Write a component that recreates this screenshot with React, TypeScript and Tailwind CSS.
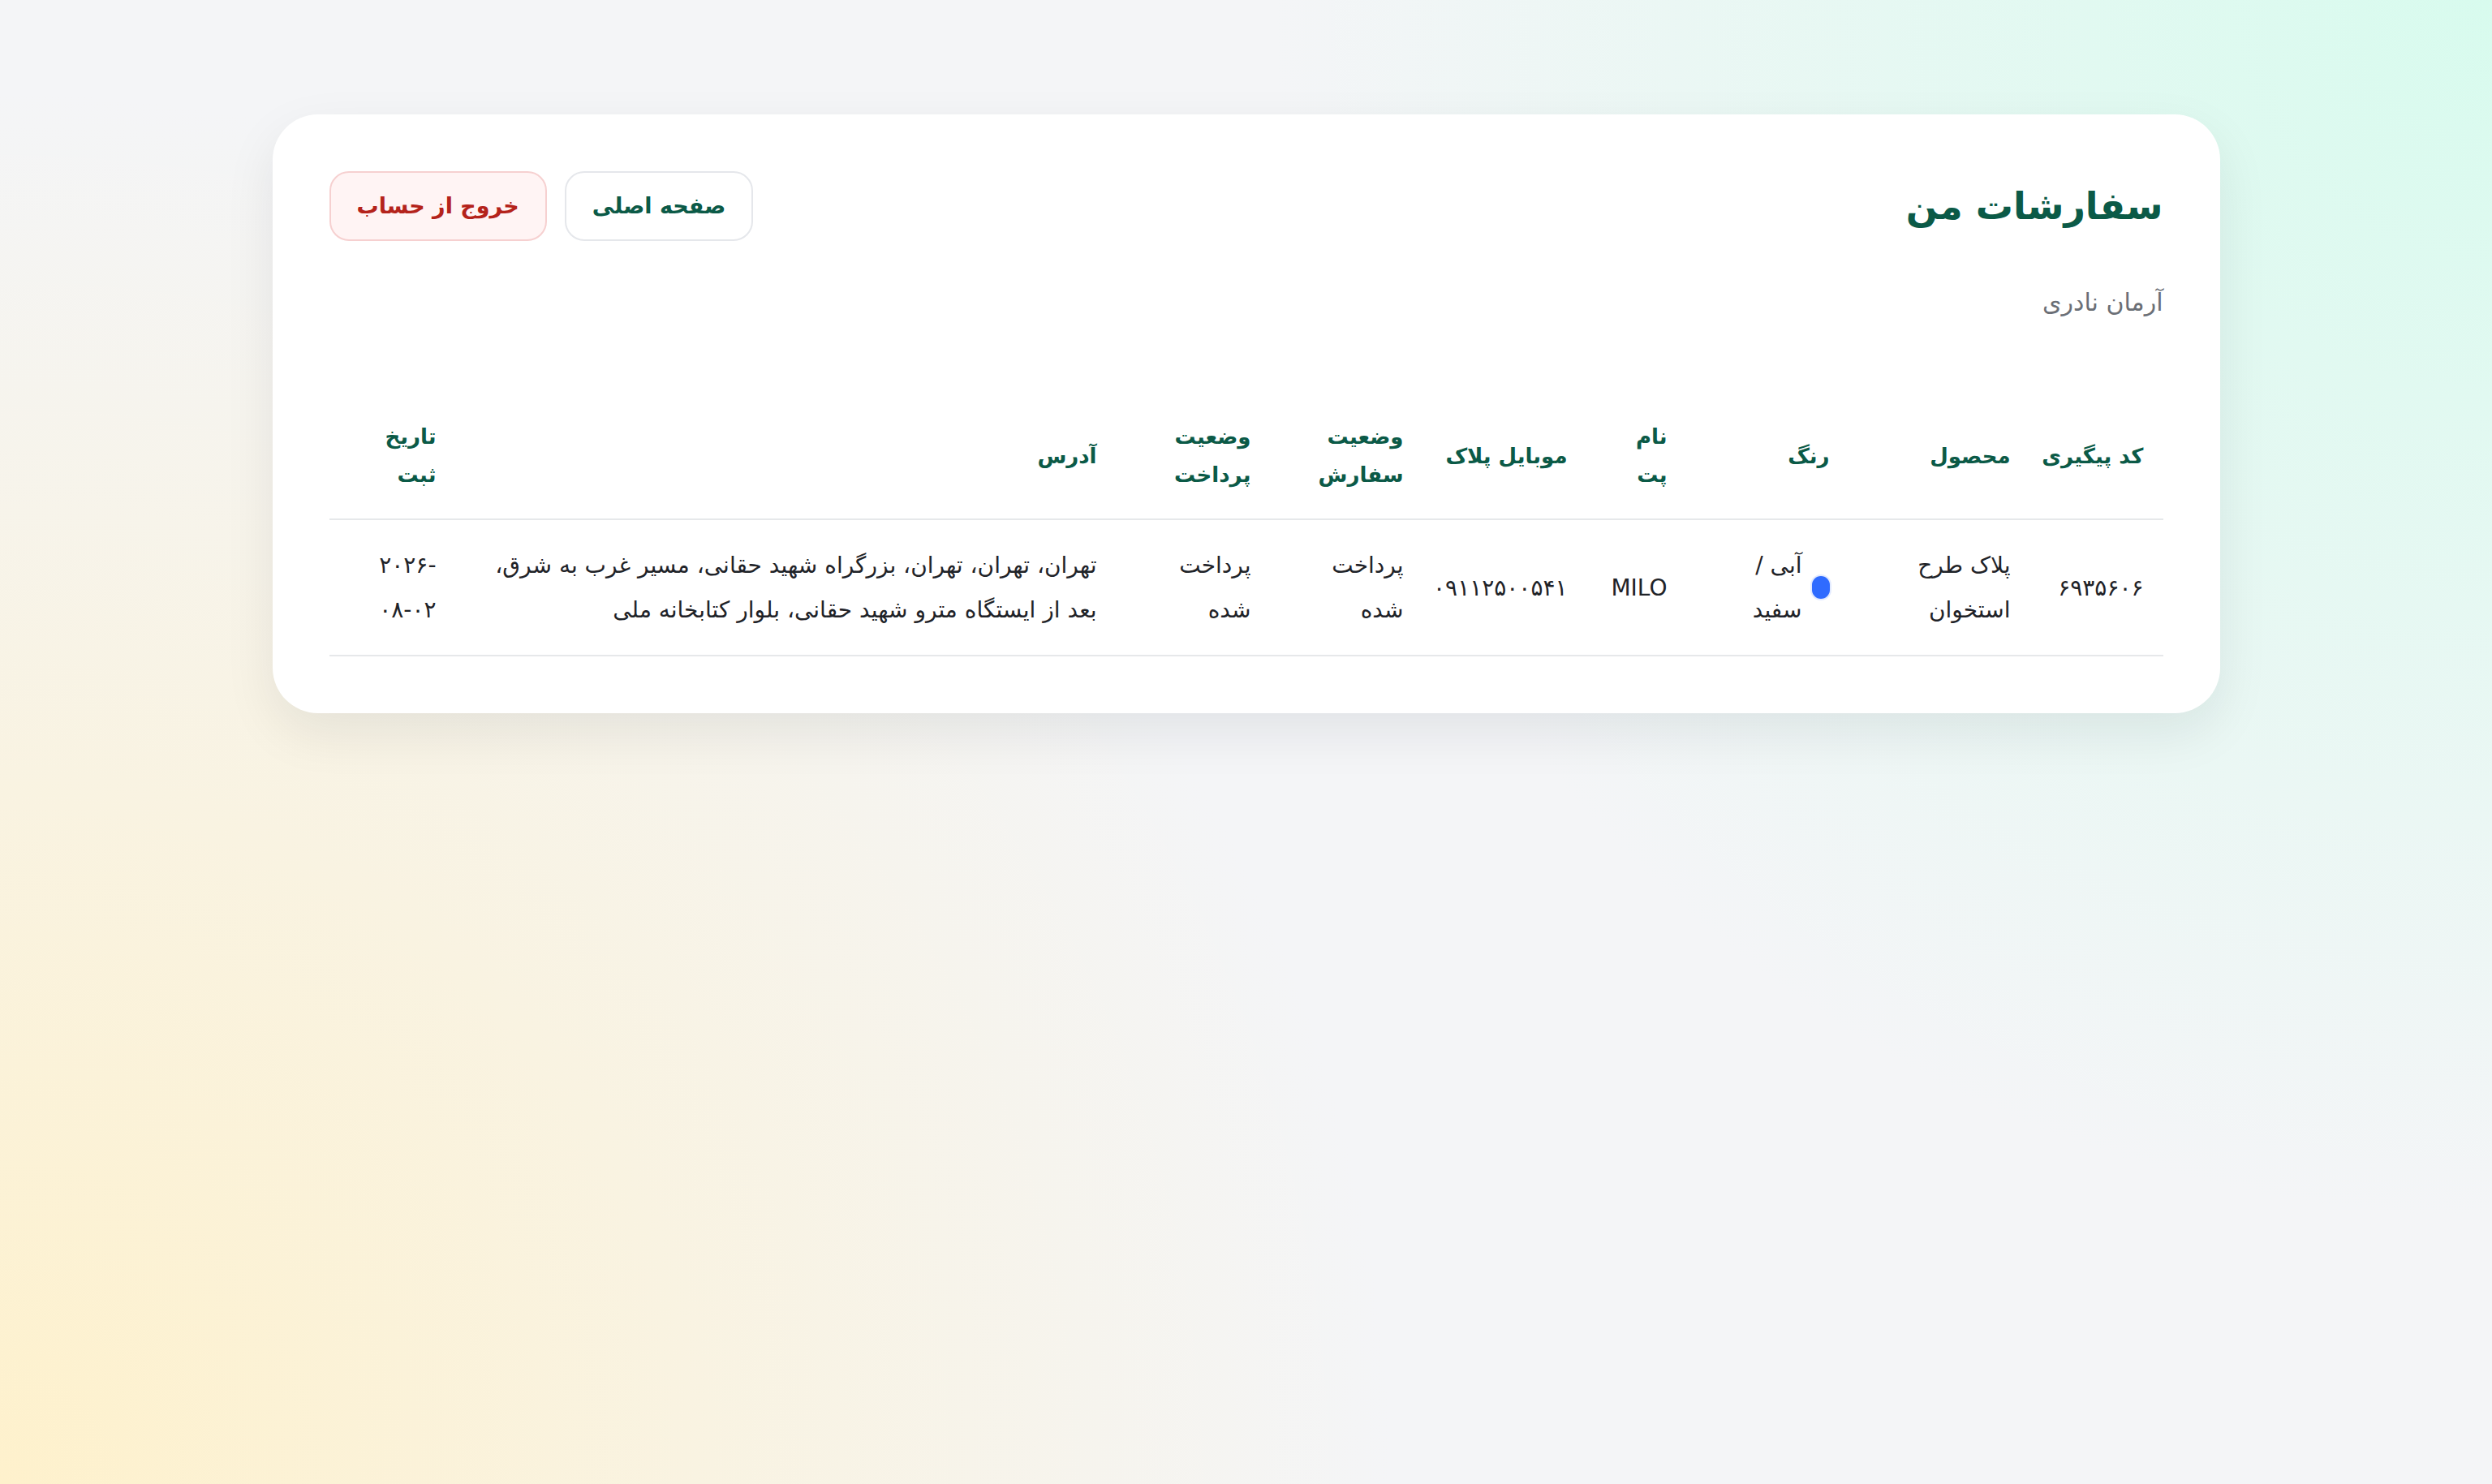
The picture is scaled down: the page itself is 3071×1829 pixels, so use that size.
const font = { fontFamily: '"DejaVu Sans", sans-serif' };

const columns = [
  { title: "کد پیگیری", width: "w-[164px]", nowrap: true },
  { title: "محصول", width: "w-[223px]", nowrap: true },
  { title: "رنگ", width: "w-[200px]", nowrap: true },
  { title: "نام پت", width: "w-[123px]", nowrap: false },
  { title: "موبایل پلاک", width: "w-[202px]", nowrap: true },
  { title: "وضعیت سفارش", width: "w-[188px]", nowrap: false },
  { title: "وضعیت پرداخت", width: "w-[190px]", nowrap: false },
  { title: "آدرس", width: "w-[814px]", nowrap: true },
  { title: "تاریخ ثبت", width: "w-[156px]", nowrap: false },
];

const orders = [
  {
    code: "۶۹۳۵۶۰۶",
    product: "پلاک طرح استخوان",
    color: "آبی / سفید",
    colorHex: "bg-[#2f6bff]",
    pet: "MILO",
    mobile: "۰۹۱۱۲۵۰۰۵۴۱",
    orderStatus: "پرداخت شده",
    payStatus: "پرداخت شده",
    address:
      "تهران، تهران، تهران، بزرگراه شهید حقانی، مسیر غرب به شرق، بعد از ایستگاه مترو شهید حقانی، بلوار کتابخانه ملی",
    date: ["۲۰۲۶-", "۰۸-۰۲"],
  },
];

export default function App() {
  return (
    <div
      dir="rtl"
      style={font}
      className="min-h-screen bg-[#f4f5f7] bg-[radial-gradient(circle_at_100%_0%,#d8fbee_0%,rgba(216,251,238,0)_42%),radial-gradient(circle_at_0%_100%,#fef1cc_0%,rgba(254,241,204,0)_48%)] pt-[141px]"
    >
      <div className="mx-auto w-[2400px] rounded-[56px] bg-white p-[70px] shadow-[0_24px_64px_rgba(15,23,42,0.08)]">
        <div className="flex items-center justify-between">
          <h1 className="text-[46px] font-bold leading-[80px] text-[#0b5a47]">سفارشات من</h1>
          <div className="flex items-center gap-[22px]">
            <button className="h-[86px] rounded-[24px] border-2 border-[#e5e7eb] bg-white px-[32px] text-[27px] font-bold text-[#0b5a47]">
              صفحه اصلی
            </button>
            <button className="h-[86px] rounded-[24px] border-2 border-[#f6d0d0] bg-[#fff4f4] px-[32px] text-[27px] font-bold text-[#b4231b]">
              خروج از حساب
            </button>
          </div>
        </div>
        <p className="mt-[52px] text-[30px] leading-[48px] text-[#6b6f76]">آرمان نادری</p>

        <table className="mt-[88px] w-full table-fixed border-collapse">
          <thead>
            <tr className="border-b-2 border-[#e6e8ea]">
              {columns.map((c) => (
                <th
                  key={c.title}
                  className={`${c.width} ${c.nowrap ? "whitespace-nowrap" : ""} px-[24px] py-[30px] text-right align-middle text-[26px] font-bold leading-[47px] text-[#0b5a47]`}
                >
                  {c.title}
                </th>
              ))}
            </tr>
          </thead>
          <tbody>
            {orders.map((o) => (
              <tr key={o.code} className="border-b-2 border-[#e6e8ea] text-[28px] leading-[55px] text-[#1f2328]">
                <td className="px-[24px] py-[28px] align-middle">{o.code}</td>
                <td className="px-[24px] py-[28px] align-middle">{o.product}</td>
                <td className="px-[24px] py-[28px] align-middle">
                  <div className="flex items-center gap-[12px]">
                    <span className={`h-[28px] w-[22px] shrink-0 rounded-full ${o.colorHex} ring-2 ring-[#e3ebff]`} />
                    <span>{o.color}</span>
                  </div>
                </td>
                <td className="px-[24px] py-[28px] align-middle">{o.pet}</td>
                <td className="px-[24px] py-[28px] align-middle">{o.mobile}</td>
                <td className="px-[24px] py-[28px] align-middle">{o.orderStatus}</td>
                <td className="px-[24px] py-[28px] align-middle">{o.payStatus}</td>
                <td className="px-[24px] py-[28px] align-middle">{o.address}</td>
                <td className="px-[24px] py-[28px] align-middle">
                  <span dir="ltr" className="inline-block">{o.date[0]}</span>
                  <wbr />
                  <span dir="ltr" className="inline-block">{o.date[1]}</span>
                </td>
              </tr>
            ))}
          </tbody>
        </table>
      </div>
    </div>
  );
}
